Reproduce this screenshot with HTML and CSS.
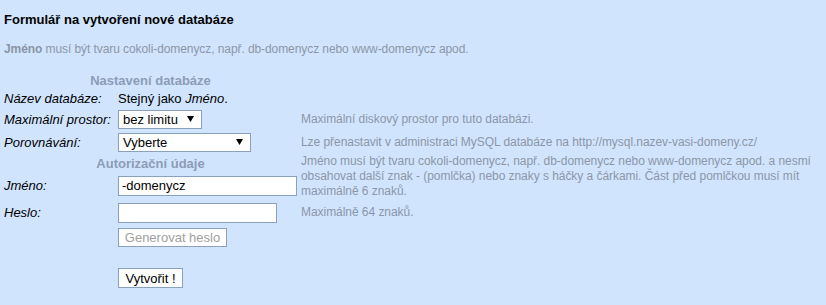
FILE: index.html
```html
<!DOCTYPE html>
<html lang="cs">
<head>
<meta charset="utf-8">
<title>Formulář</title>
<link rel="stylesheet" href="styles.css">
</head>
<body>
<div class="page">
  <h1 class="title">Formulář na vytvoření nové databáze</h1>
  <p class="intro"><b>Jméno</b> musí být tvaru cokoli-domenycz, např. db-domenycz nebo www-domenycz apod.</p>
  <table class="form">
    <tr class="r-head1">
      <th colspan="2" class="section">Nastavení databáze</th>
      <td></td>
    </tr>
    <tr class="r-name">
      <td class="label">Název databáze:</td>
      <td class="value">Stejný jako <i>Jméno</i>.</td>
      <td></td>
    </tr>
    <tr class="r-max">
      <td class="label">Maximální prostor:</td>
      <td class="value"><select class="sel sel-limit"><option>bez limitu</option></select></td>
      <td class="hint">Maximální diskový prostor pro tuto databázi.</td>
    </tr>
    <tr class="r-coll">
      <td class="label">Porovnávání:</td>
      <td class="value"><select class="sel sel-coll"><option>Vyberte</option></select></td>
      <td class="hint">Lze přenastavit v administraci MySQL databáze na http://mysql.nazev-vasi-domeny.cz/</td>
    </tr>
    <tr class="r-head2">
      <th colspan="2" class="section">Autorizační údaje</th>
      <td rowspan="2" class="hint hint-multi">Jméno musí být tvaru cokoli-domenycz, např. db-domenycz nebo www-domenycz apod. a nesmí obsahovat další znak - (pomlčka) nebo znaky s háčky a čárkami. Část před pomlčkou musí mít maximálně 6 znaků.</td>
    </tr>
    <tr class="r-user">
      <td class="label">Jméno:</td>
      <td class="value"><input class="txt txt-name" type="text" value="-domenycz"></td>
    </tr>
    <tr class="r-pass">
      <td class="label">Heslo:</td>
      <td class="value"><input class="txt txt-pass" type="password"></td>
      <td class="hint">Maximálně 64 znaků.</td>
    </tr>
    <tr class="r-gen">
      <td></td>
      <td class="value"><button class="btn btn-gen" type="button" disabled>Generovat heslo</button></td>
      <td></td>
    </tr>
    <tr class="r-spacer"><td colspan="3"></td></tr>
    <tr class="r-submit">
      <td></td>
      <td class="value"><button class="btn btn-submit" type="submit">Vytvořit !</button></td>
      <td></td>
    </tr>
  </table>
</div>
</body>
</html>
```
FILE: styles.css
```css
html, body {
  margin: 0;
  padding: 0;
  background: #d0e5fd;
}
body {
  font-family: "Liberation Sans", Arial, sans-serif;
  font-size: 13px;
  color: #000;
}
.page {
  padding: 12px 4px 0 4px;
}
.title {
  margin: 0;
  font-size: 13px;
  font-weight: bold;
  line-height: 15px;
}
.intro {
  margin: 15px 0 0 0;
  font-size: 12px;
  line-height: 14px;
  letter-spacing: -0.08px;
  color: #8c96a8;
}
.intro b {
  color: #8a94a6;
}
.form {
  border-collapse: collapse;
  margin-top: 16px;
  margin-left: -2px;
  width: 822px;
}
.form td, .form th {
  padding: 0 2px;
}
.r-head1 { height: 16px; }
.r-name { height: 20px; }
.r-max { height: 22px; }
.r-coll { height: 24px; }
.r-head2 { height: 18px; }
.r-user { height: 27px; }
.r-pass { height: 27px; }
.r-gen { height: 23px; }
.r-spacer { height: 18px; }
.r-submit { height: 22px; }
.section {
  font-size: 13px;
  font-weight: bold;
  color: #8d9cb6;
  text-align: center;
  vertical-align: middle;
  line-height: 15px;
}
.label {
  font-style: italic;
  width: 110px;
  vertical-align: middle;
  white-space: nowrap;
  line-height: 15px;
}
.value {
  vertical-align: middle;
  width: 178px;
  white-space: nowrap;
  line-height: 15px;
}
.hint {
  font-size: 12px;
  line-height: 15px;
  letter-spacing: -0.05px;
  color: #8c96a8;
  vertical-align: middle;
}
.sel {
  -webkit-appearance: none;
  appearance: none;
  font-family: "Liberation Sans", Arial, sans-serif;
  font-size: 13px;
  color: #000;
  background-color: #fff;
  background-image: url("data:image/svg+xml,%3Csvg xmlns='http://www.w3.org/2000/svg' width='7' height='6'%3E%3Cpath d='M0 0H7L3.5 6Z' fill='%23000'/%3E%3C/svg%3E");
  background-repeat: no-repeat;
  background-position: right 7px center;
  border: 1px solid #8aa0bd;
  border-radius: 0;
  height: 19px;
  padding: 0 16px 0 4px;
  margin: 0;
  display: block;
}
.sel-limit { width: 84px; }
.sel-coll { width: 133px; }
.txt {
  font-family: "Liberation Sans", Arial, sans-serif;
  font-size: 13px;
  color: #000;
  background: #fff;
  border: 1px solid #8aa0bd;
  height: 20px;
  box-sizing: border-box;
  padding: 0 3px;
  margin: 0;
  display: block;
  outline: none;
}
.txt-name { width: 179px; }
.txt-pass { width: 159px; }
.btn {
  font-family: "Liberation Sans", Arial, sans-serif;
  font-size: 13px;
  background: #fff;
  border: 1px solid #8aa0bd;
  border-radius: 0;
  box-sizing: border-box;
  padding: 0 4px;
  margin: 0;
  display: block;
}
.btn-gen {
  color: #a0a0a0;
  width: 109px;
  height: 19px;
}
.btn-submit {
  color: #000;
  width: 65px;
  height: 20px;
}
```
